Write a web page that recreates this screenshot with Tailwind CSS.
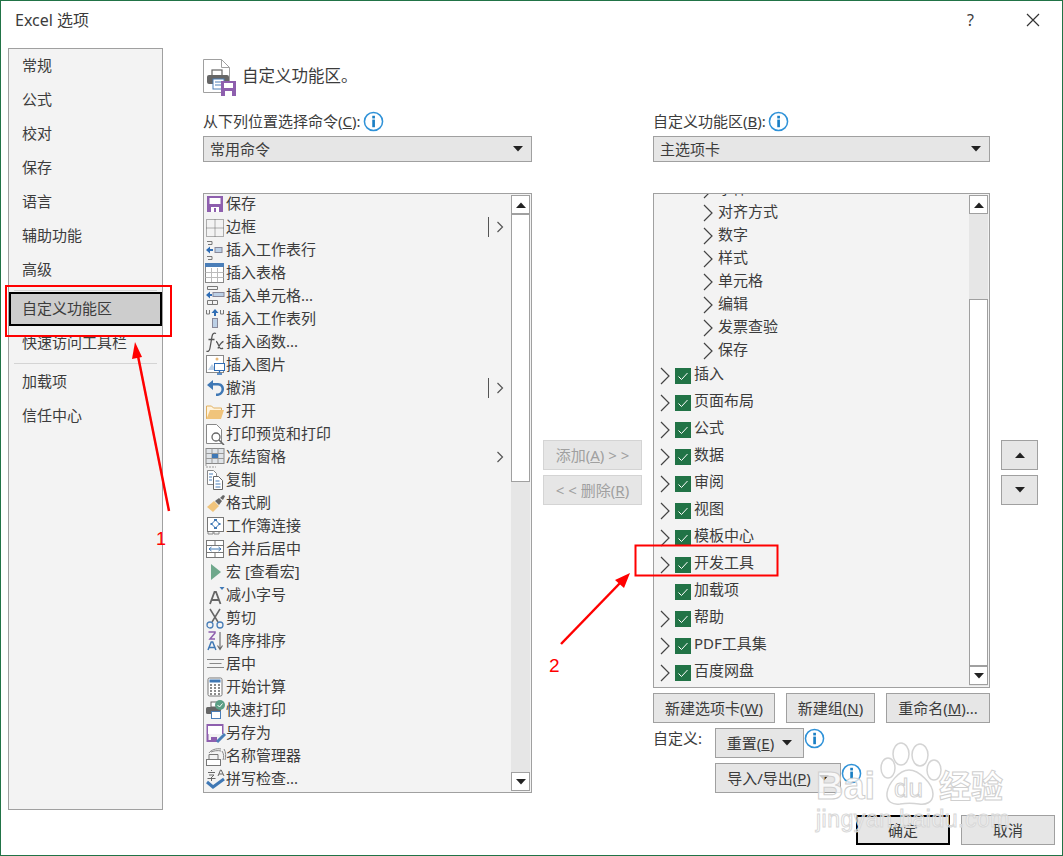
<!DOCTYPE html>
<html lang="zh-CN">
<head>
    <meta charset="UTF-8">
    <title>Excel 选项</title>
    <script src="https://cdn.jsdelivr.net/npm/@tailwindcss/browser@4"></script>
</head>
<body class="bg-white font-['Noto_Sans','Noto_Sans_CJK_SC',sans-serif] text-[15px] leading-none text-[#3c3c3c]">
<svg class="hidden">
    <symbol id="info" viewBox="0 0 22 22"><circle cx="11" cy="11" r="9.5" fill="#fff" stroke="#2f92d8" stroke-width="1.6"/><rect x="9.7" y="5" width="2.8" height="2.8" fill="#1b7fc4"/><rect x="9.7" y="9" width="2.8" height="8" fill="#1b7fc4"/></symbol>
    <symbol id="big" viewBox="0 0 10 18"><path d="M1 1l8 8-8 8" fill="none" stroke="#444" stroke-width="1.2"/></symbol>
    <symbol id="small" viewBox="0 0 8 12"><path d="M1.5 1l5 5-5 5" fill="none" stroke="#555" stroke-width="1.2"/></symbol>
    <symbol id="chk" viewBox="0 0 16 16"><rect width="16" height="16" fill="#217346"/><path d="M3.5 8.5l3 3 6-6.500" fill="none" stroke="#fff" stroke-width="1"/></symbol>
    <symbol id="up" viewBox="0 0 10 6"><path d="M0 6l5-5.500 5 5.500z" fill="#222"/></symbol>
    <symbol id="down" viewBox="0 0 10 6"><path d="M0 0l5 5.500 5-5.500z" fill="#222"/></symbol>
</svg>

<div class="relative box-border w-[1063px] h-[856px] border border-[#217346] overflow-hidden">
    <!-- title -->
    <div class="flex items-center h-[47px] pl-[14px] pb-[9px]">
        <span class="text-[16px]">Excel 选项</span>
        <span class="ml-auto mr-[52px] text-[16px]">?</span>
        <svg class="mr-[22px]" width="14" height="14" viewBox="0 0 14 14"><path d="M1 1l12 12M13 1L1 13" stroke="#333" stroke-width="1.200"/></svg>
    </div>

    <div class="flex h-[762px]">
        <!-- sidebar -->
        <div class="ml-[7px] w-[155px] shrink-0 border border-[#a0a0a0] bg-[#f3f3f3]">
            <div class="flex items-center h-[34px] px-[13px] pb-[2px]">常规</div>
            <div class="flex items-center h-[34px] px-[13px] pb-[2px]">公式</div>
            <div class="flex items-center h-[34px] px-[13px] pb-[2px]">校对</div>
            <div class="flex items-center h-[34px] px-[13px] pb-[2px]">保存</div>
            <div class="flex items-center h-[34px] px-[13px] pb-[2px]">语言</div>
            <div class="flex items-center h-[34px] px-[13px] pb-[2px]">辅助功能</div>
            <div class="flex items-center h-[34px] px-[13px] pb-[2px]">高级</div>
            <div class="h-[5px] pt-[3px] px-[5px]"><div class="h-px bg-[#d4d4d4]"></div></div>
            <div class="flex items-center h-[34px] px-[11px] pb-[2px] border-2 border-black bg-[#cdcdcd]">自定义功能区</div>
            <div class="flex items-center h-[34px] px-[13px] pb-[2px]">快速访问工具栏</div>
            <div class="h-[4px] pt-[3px] px-[5px]"><div class="h-px bg-[#d4d4d4]"></div></div>
            <div class="flex items-center h-[34px] px-[13px]">加载项</div>
            <div class="flex items-center h-[34px] px-[13px]">信任中心</div>
        </div>

        <!-- main -->
        <div class="ml-10 flex-1">
            <div class="flex items-center h-[62px] pb-[3px]">
                <svg width="34" height="38" viewBox="0 0 34 38">
                    <path d="M.5.5h18l8 8v25H.5z" fill="#fff" stroke="#a0a0a0"/><path d="M18.500.5v8h8" fill="none" stroke="#a0a0a0"/>
                    <rect x="9" y="11" width="10" height="6" fill="#fff" stroke="#666" stroke-width="1.200"/>
                    <rect x="4" y="16" width="22" height="9" rx="2" fill="#666"/>
                    <rect x="10" y="20" width="11" height="10" fill="#fff" stroke="#4a7eb8"/><path d="M12 23h7M12 26h7" stroke="#4a7eb8"/>
                    <rect x="18" y="22" width="15" height="15" fill="#8e5fae"/><rect x="21" y="24" width="9" height="5" fill="#fff"/><rect x="22" y="32" width="7" height="5" fill="#fff"/>
                </svg>
                <span class="ml-[5px] text-[16.5px] pb-[3px]">自定义功能区。</span>
            </div>
            <div class="flex">
                <!-- left column -->
                <div class="w-[329px] shrink-0">
                    <div class="flex items-center h-[26px] pb-[4px]">从下列位置选择命令(<u>C</u>):<svg class="ml-[2px]" width="21" height="21"><use href="#info"/></svg></div>
                    <div class="flex items-center justify-between h-[26px] px-[6px] border border-[#a0a0a0] bg-[#e6e6e6]">常用命令<svg class="mr-[2px]" width="10" height="6"><use href="#down"/></svg></div>
                    <div class="flex mt-[31px] h-[600px] border border-[#a0a0a0] bg-[#f3f3f3]">
                        <div class="flex-1 overflow-hidden">
                            <div class="-mt-[2px] text-[#3c3c3c]">
                                <div class="flex items-center h-[23px] pl-px"><svg class="-mr-px shrink-0" width="22" height="22" viewBox="0 0 22 22"><rect x="2" y="3" width="16" height="16" fill="#8e5fae"/><rect x="4.500" y="5" width="11" height="6" fill="#fff"/><rect x="6" y="14" width="8" height="5" fill="#fff"/><rect x="9" y="15" width="2" height="4" fill="#8e5fae"/></svg>保存</div>
                                <div class="flex items-center h-[23px] pl-px pr-[7px]"><svg class="-mr-px shrink-0" width="22" height="22" viewBox="0 0 22 22"><path d="M1.500 3.500h17v17h-17zM10 3.500v17M1.500 12h17" fill="none" stroke="#666" stroke-dasharray="1 1"/></svg>边框<span class="ml-auto w-px h-[20px] bg-[#555]"></span><svg class="ml-[7px]" width="8" height="12"><use href="#small"/></svg></div>
                                <div class="flex items-center h-[23px] pl-px"><svg class="-mr-px shrink-0" width="22" height="22" viewBox="0 0 22 22"><path d="M2 2.500h5v3H3M2 17.500h5v3H3" fill="none" stroke="#777"/><path d="M1 11l4-3.500v2.500h3v2H5v2.500z" fill="#2f6db5"/><rect x="10" y="8.500" width="7" height="5" fill="#bcd0e6" stroke="#889"/></svg>插入工作表行</div>
                                <div class="flex items-center h-[23px] pl-px"><svg class="-mr-px shrink-0" width="22" height="22" viewBox="0 0 22 22"><rect x=".5" y="1.500" width="18" height="19" fill="#fff" stroke="#888"/><path d="M.5 10.500h18M.5 15.500h18M6.500 6v14M12.500 6v14" stroke="#bbb"/><rect y="1" width="19" height="4" fill="#4a7eb8"/></svg>插入表格</div>
                                <div class="flex items-center h-[23px] pl-px"><svg class="-mr-px shrink-0" width="22" height="22" viewBox="0 0 22 22"><path d="M2.500 1.500h10v3h-10zM2.500 15.500h10v4h-10zM7.500 15.500v4" fill="none" stroke="#777"/><path d="M1 10l4-3.500v2.500h2v2H5v2.500z" fill="#2f6db5"/><rect x="8" y="7.500" width="11" height="4" fill="#bcd0e6" stroke="#889"/></svg>插入单元格...</div>
                                <div class="flex items-center h-[23px] pl-px"><svg class="-mr-px shrink-0" width="22" height="22" viewBox="0 0 22 22"><path d="M1.500 2v4h3V2M15.500 2v4h3V2" fill="none" stroke="#777"/><path d="M10 1l3.500 4H11v3H9V5H6.500z" fill="#2f6db5"/><rect x="7.500" y="10.500" width="5" height="9" fill="#bcd0e6" stroke="#889"/></svg>插入工作表列</div>
                                <div class="flex items-center h-[23px] pl-px"><svg class="-mr-px shrink-0" width="22" height="22" viewBox="0 0 22 22"><path d="M11 2.500c-2-1-3.500 0-4 3L5 17c-.5 3-2 4-3.500 3M3.500 8.500H9.500M11 10.500c2 0 2.500 6 4.500 7 1 .3 2 0 2.500-.5M18.500 10.500c-1 0-4.500 3.500-5.500 7" fill="none" stroke="#555" stroke-width="1.300"/></svg>插入函数...</div>
                                <div class="flex items-center h-[23px] pl-px"><svg class="-mr-px shrink-0" width="22" height="22" viewBox="0 0 22 22"><rect x="1.500" y="1.500" width="17" height="17" fill="#fff" stroke="#888"/><path d="M3 16l4-6 4 6z" fill="#bcd0e6"/><circle cx="12" cy="5" r="1.500" fill="#e8b878"/><rect x="9.500" y="9.500" width="10" height="7" fill="#fff" stroke="#2f6db5"/><path d="M14.500 17v2M12 20h5" stroke="#2f6db5" stroke-width="1.300"/></svg>插入图片</div>
                                <div class="flex items-center h-[23px] pl-px pr-[7px]"><svg class="-mr-px shrink-0" width="22" height="22" viewBox="0 0 22 22"><path d="M2 8l6-5v3h5c4 0 6 3 6 6s-2 6-6 7h-2v-2.500h2c2-.5 3.500-2 3.500-4.500S14.500 8.500 13 8.500H8V13z" fill="#3f78b5"/></svg>撤消<span class="ml-auto w-px h-[20px] bg-[#555]"></span><svg class="ml-[7px]" width="8" height="12"><use href="#small"/></svg></div>
                                <div class="flex items-center h-[23px] pl-px"><svg class="-mr-px shrink-0" width="22" height="22" viewBox="0 0 22 22"><path d="M1.500 19V6h5l2 2h8v2" fill="#fff3dc" stroke="#e0b060"/><path d="M1.500 19L5 10h14l-3 9z" fill="#f0c47c"/></svg>打开</div>
                                <div class="flex items-center h-[23px] pl-px"><svg class="-mr-px shrink-0" width="22" height="22" viewBox="0 0 22 22"><path d="M1.500 1.500h10l5 5v14h-15z" fill="#fff" stroke="#888"/><circle cx="11" cy="14" r="4" fill="#fff" stroke="#666" stroke-width="1.300"/><path d="M14 17l5 5" stroke="#666" stroke-width="1.600"/></svg>打印预览和打印</div>
                                <div class="flex items-center h-[23px] pl-px pr-[7px]"><svg class="-mr-px shrink-0" width="22" height="22" viewBox="0 0 22 22"><rect x="1" y="2.500" width="18" height="15" fill="#e0e4e8" stroke="#888"/><path d="M1 7.500h18M1 12.500h18M7 2.500v15M13 2.500v15" stroke="#999"/><rect x="7" y="8" width="6" height="4" fill="#3f78b5"/><path d="M1 18v3h10" fill="none" stroke="#999" stroke-dasharray="2 1"/></svg>冻结窗格<svg class="ml-auto" width="8" height="12"><use href="#small"/></svg></div>
                                <div class="flex items-center h-[23px] pl-px"><svg class="-mr-px shrink-0" width="22" height="22" viewBox="0 0 22 22"><path d="M2.500 1.500h6l3 3v11h-9z" fill="#fff" stroke="#888"/><path d="M8.500 7.500h5l4 4v9h-9z" fill="#fff" stroke="#666"/><path d="M4 5h4M4 8h3M4 11h3M10.500 12h4M10.500 15h5M10.500 18h5" stroke="#4a7eb8"/></svg>复制</div>
                                <div class="flex items-center h-[23px] pl-px"><svg class="-mr-px shrink-0" width="22" height="22" viewBox="0 0 22 22"><path d="M2 15l7-6 5 5-6 6z" fill="#f0c47c"/><path d="M10 9l4-3 3 3-3 4z" fill="#666"/><path d="M15 6l3-3 2 1-2 4z" fill="#666"/></svg>格式刷</div>
                                <div class="flex items-center h-[23px] pl-px"><svg class="-mr-px shrink-0" width="22" height="22" viewBox="0 0 22 22"><rect x="2.500" y="2.500" width="16" height="14" fill="#fff" stroke="#777"/><path d="M10.500 5l4 4-4 4-4-4z" fill="none" stroke="#3f78b5"/><rect x="9" y="4" width="3" height="2" fill="#3f78b5"/><rect x="9" y="12" width="3" height="2" fill="#3f78b5"/><rect x="5.500" y="8" width="2" height="2" fill="#3f78b5"/><rect x="13.500" y="8" width="2" height="2" fill="#3f78b5"/><path d="M3 17v2h5v-2M9 17v2h5v-2" fill="none" stroke="#888"/></svg>工作簿连接</div>
                                <div class="flex items-center h-[23px] pl-px"><svg class="-mr-px shrink-0" width="22" height="22" viewBox="0 0 22 22"><rect x="1.500" y="2.500" width="17" height="17" fill="#fff" stroke="#777"/><path d="M1.500 7.500h17M1.500 14.500h17M10 2.500v5M10 14.500v5" stroke="#777"/><path d="M4 11h12M4 11l2.500-2M4 11l2.500 2M16 11l-2.500-2M16 11l-2.500 2" fill="none" stroke="#3f78b5"/></svg>合并后居中</div>
                                <div class="flex items-center h-[23px] pl-px"><svg class="-mr-px shrink-0" width="22" height="22" viewBox="0 0 22 22"><path d="M6 3l10 8-10 8z" fill="#6fa88c"/></svg>宏 [查看宏]</div>
                                <div class="flex items-center h-[23px] pl-px"><svg class="-mr-px shrink-0" width="22" height="22" viewBox="0 0 22 22"><path d="M5 20l4.500-12h1.500L15.500 20M6.500 16h7.500" fill="none" stroke="#666" stroke-width="1.800"/><path d="M14.500 3h5l-2.500 3z" fill="#3f78b5"/></svg>减小字号</div>
                                <div class="flex items-center h-[23px] pl-px"><svg class="-mr-px shrink-0" width="22" height="22" viewBox="0 0 22 22"><path d="M5 2l8 13M15 2L7 15" stroke="#666" stroke-width="1.500"/><circle cx="5" cy="18" r="3" fill="none" stroke="#4a7eb8" stroke-width="1.300"/><circle cx="15" cy="18" r="3" fill="none" stroke="#4a7eb8" stroke-width="1.300"/></svg>剪切</div>
                                <div class="flex items-center h-[23px] pl-px"><svg class="-mr-px shrink-0" width="22" height="22" viewBox="0 0 22 22"><path d="M3.500 2h6.500v1L5 9h5" fill="none" stroke="#8e5fae" stroke-width="1.500"/><path d="M3 20l3.200-8h1.500l3.200 8M4.500 17.500h5" fill="none" stroke="#3f78b5" stroke-width="1.500"/><path d="M15 2v17M12.500 15.500L15 19.500l2.500-4" fill="none" stroke="#666" stroke-width="1.100"/></svg>降序排序</div>
                                <div class="flex items-center h-[23px] pl-px"><svg class="-mr-px shrink-0" width="22" height="22" viewBox="0 0 22 22"><path d="M2 6.500h17M4.500 10.500h12M2 14.500h17" stroke="#888"/></svg>居中</div>
                                <div class="flex items-center h-[23px] pl-px"><svg class="-mr-px shrink-0" width="22" height="22" viewBox="0 0 22 22"><rect x="3" y="2" width="14" height="18" rx="1.500" fill="#fff" stroke="#777"/><rect x="4.500" y="3.500" width="11" height="3" fill="#3f78b5"/><path d="M5 9h2M9 9h2M13 9h2M5 12h2M9 12h2M13 12h2M5 15h2M9 15h2M13 15h2M5 18h2M9 18h2M13 18h2" stroke="#666" stroke-width="1.500"/></svg>开始计算</div>
                                <div class="flex items-center h-[23px] pl-px"><svg class="-mr-px shrink-0" width="22" height="22" viewBox="0 0 22 22"><rect x="6" y="3" width="8" height="5" fill="#fff" stroke="#666"/><rect x="1" y="8" width="15" height="7" rx="1.500" fill="#666"/><rect x="6.500" y="12.500" width="9" height="7" fill="#fff" stroke="#4a7eb8"/><circle cx="15" cy="6" r="5" fill="#5b9f85"/><path d="M12.500 6l2 2 3-3.500" fill="none" stroke="#fff"/></svg>快速打印</div>
                                <div class="flex items-center h-[23px] pl-px"><svg class="-mr-px shrink-0" width="22" height="22" viewBox="0 0 22 22"><path d="M13 19H2.500V3h15v9" fill="none" stroke="#8e5fae" stroke-width="2"/><path d="M3 3h14v9H3z" fill="#fff"/><path d="M2 2h16v2H2z" fill="#8e5fae"/><rect x="6" y="15" width="6" height="5" fill="#8e5fae"/><path d="M12 20l8-8" stroke="#4a7eb8" stroke-width="3"/></svg>另存为</div>
                                <div class="flex items-center h-[23px] pl-px"><svg class="-mr-px shrink-0" width="22" height="22" viewBox="0 0 22 22"><path d="M4 8c2-3 7-5 12-4M6 7c2-1 7-2 10-1M17 6c2 3 2 6 1 9M19 4c2 3 2 8 1 11" fill="none" stroke="#888"/><rect x="1.500" y="14.500" width="14" height="6" fill="#fff" stroke="#777"/><path d="M4 14V9.500h9V14" fill="none" stroke="#777"/></svg>名称管理器</div>
                                <div class="flex items-center h-[23px] pl-px"><svg class="-mr-px shrink-0" width="22" height="22" viewBox="0 0 22 22"><path d="M3 4.500h7M6.500 2v1M4 7h5l-2 2M2.500 10.500h8M6.500 9v4" fill="none" stroke="#666"/><path d="M13 8l2.500-6h.7L19 8M14 6h4" fill="none" stroke="#666"/><path d="M2 14l6 5 11-8" fill="none" stroke="#3f78b5" stroke-width="3"/></svg>拼写检查...</div>
                            </div>
                        </div>
                        <div class="flex flex-col w-[19px] shrink-0 my-px mr-px bg-[#e6e6e6]">
                            <div class="flex items-center justify-center h-[19px] border border-[#a0a0a0] bg-white"><svg width="10" height="6"><use href="#up"/></svg></div>
                            <div class="h-[268px] border border-[#a0a0a0] bg-white"></div>
                            <div class="mt-auto flex items-center justify-center h-[19px] border border-[#a0a0a0] bg-white"><svg width="10" height="6"><use href="#down"/></svg></div>
                        </div>
                    </div>
                </div>

                <!-- add / remove -->
                <div class="ml-[11px] w-[99px] shrink-0 pt-[330px] flex flex-col gap-[5px] text-[#a0a0a0]">
                    <div class="flex items-center justify-center h-[30px] border border-[#d4d4d4] bg-[#e6e6e6]"><span class="whitespace-pre">添加(<u>A</u>) &gt; &gt;</span></div>
                    <div class="flex items-center justify-center h-[30px] border border-[#d4d4d4] bg-[#e6e6e6]"><span class="whitespace-pre">&lt; &lt; 删除(<u>R</u>)</span></div>
                </div>

                <!-- right column -->
                <div class="ml-[11px] w-[337px] shrink-0">
                    <div class="flex items-center h-[26px] pb-[4px]">自定义功能区(<u>B</u>):<svg class="ml-[2px]" width="21" height="21"><use href="#info"/></svg></div>
                    <div class="flex items-center justify-between h-[26px] px-[6px] border border-[#a0a0a0] bg-[#e6e6e6]">主选项卡<svg class="mr-[2px]" width="10" height="6"><use href="#down"/></svg></div>
                    <div class="flex mt-[31px] h-[495px] border border-[#a0a0a0] bg-[#f3f3f3]">
                        <div class="flex-1 overflow-hidden">
                            <div class="-mt-[16px]">
                                <div class="flex items-center h-[23px] pl-[49px]"><svg class="mr-[5px]" width="10" height="18"><use href="#big"/></svg><span class="-mt-[2px]">字体</span></div>
                                <div class="flex items-center h-[23px] pl-[49px]"><svg class="mr-[5px]" width="10" height="18"><use href="#big"/></svg><span class="-mt-[2px]">对齐方式</span></div>
                                <div class="flex items-center h-[23px] pl-[49px]"><svg class="mr-[5px]" width="10" height="18"><use href="#big"/></svg><span class="-mt-[2px]">数字</span></div>
                                <div class="flex items-center h-[23px] pl-[49px]"><svg class="mr-[5px]" width="10" height="18"><use href="#big"/></svg><span class="-mt-[2px]">样式</span></div>
                                <div class="flex items-center h-[23px] pl-[49px]"><svg class="mr-[5px]" width="10" height="18"><use href="#big"/></svg><span class="-mt-[2px]">单元格</span></div>
                                <div class="flex items-center h-[23px] pl-[49px]"><svg class="mr-[5px]" width="10" height="18"><use href="#big"/></svg><span class="-mt-[2px]">编辑</span></div>
                                <div class="flex items-center h-[23px] pl-[49px]"><svg class="mr-[5px]" width="10" height="18"><use href="#big"/></svg><span class="-mt-[2px]">发票查验</span></div>
                                <div class="flex items-center h-[23px] pl-[49px]"><svg class="mr-[5px]" width="10" height="18"><use href="#big"/></svg><span class="-mt-[2px]">保存</span></div>
                                <div class="flex items-center h-[27px] pl-[6px]"><svg class="mr-[5px]" width="10" height="18"><use href="#big"/></svg><svg class="mr-[3px]" width="16" height="16"><use href="#chk"/></svg><span class="-mt-[5px]">插入</span></div>
                                <div class="flex items-center h-[27px] pl-[6px]"><svg class="mr-[5px]" width="10" height="18"><use href="#big"/></svg><svg class="mr-[3px]" width="16" height="16"><use href="#chk"/></svg><span class="-mt-[5px]">页面布局</span></div>
                                <div class="flex items-center h-[27px] pl-[6px]"><svg class="mr-[5px]" width="10" height="18"><use href="#big"/></svg><svg class="mr-[3px]" width="16" height="16"><use href="#chk"/></svg><span class="-mt-[5px]">公式</span></div>
                                <div class="flex items-center h-[27px] pl-[6px]"><svg class="mr-[5px]" width="10" height="18"><use href="#big"/></svg><svg class="mr-[3px]" width="16" height="16"><use href="#chk"/></svg><span class="-mt-[5px]">数据</span></div>
                                <div class="flex items-center h-[27px] pl-[6px]"><svg class="mr-[5px]" width="10" height="18"><use href="#big"/></svg><svg class="mr-[3px]" width="16" height="16"><use href="#chk"/></svg><span class="-mt-[5px]">审阅</span></div>
                                <div class="flex items-center h-[27px] pl-[6px]"><svg class="mr-[5px]" width="10" height="18"><use href="#big"/></svg><svg class="mr-[3px]" width="16" height="16"><use href="#chk"/></svg><span class="-mt-[5px]">视图</span></div>
                                <div class="flex items-center h-[27px] pl-[6px]"><svg class="mr-[5px]" width="10" height="18"><use href="#big"/></svg><svg class="mr-[3px]" width="16" height="16"><use href="#chk"/></svg><span class="-mt-[5px]">模板中心</span></div>
                                <div class="flex items-center h-[27px] pl-[6px]"><svg class="mr-[5px]" width="10" height="18"><use href="#big"/></svg><svg class="mr-[3px]" width="16" height="16"><use href="#chk"/></svg><span class="-mt-[5px]">开发工具</span></div>
                                <div class="flex items-center h-[27px] pl-[21px]"><svg class="mr-[3px]" width="16" height="16"><use href="#chk"/></svg><span class="-mt-[5px]">加载项</span></div>
                                <div class="flex items-center h-[27px] pl-[6px]"><svg class="mr-[5px]" width="10" height="18"><use href="#big"/></svg><svg class="mr-[3px]" width="16" height="16"><use href="#chk"/></svg><span class="-mt-[5px]">帮助</span></div>
                                <div class="flex items-center h-[27px] pl-[6px]"><svg class="mr-[5px]" width="10" height="18"><use href="#big"/></svg><svg class="mr-[3px]" width="16" height="16"><use href="#chk"/></svg><span class="-mt-[5px]">PDF工具集</span></div>
                                <div class="flex items-center h-[27px] pl-[6px]"><svg class="mr-[5px]" width="10" height="18"><use href="#big"/></svg><svg class="mr-[3px]" width="16" height="16"><use href="#chk"/></svg><span class="-mt-[5px]">百度网盘</span></div>
                            </div>
                        </div>
                        <div class="flex flex-col w-[19px] shrink-0 my-px mr-px bg-[#e6e6e6]">
                            <div class="flex items-center justify-center h-[19px] border border-[#a0a0a0] bg-white"><svg width="10" height="6"><use href="#up"/></svg></div>
                            <div class="mt-[85px] h-[367px] border border-[#a0a0a0] bg-white"></div>
                            <div class="flex items-center justify-center h-[19px] border border-[#a0a0a0] bg-white"><svg width="10" height="6"><use href="#down"/></svg></div>
                        </div>
                    </div>
                    <div class="flex gap-[11px] mt-[5px]">
                        <div class="flex items-center justify-center w-[122px] h-[30px] border border-[#a0a0a0] bg-[#e6e6e6]"><span>新建选项卡(<u>W</u>)</span></div>
                        <div class="flex items-center justify-center w-[89px] h-[30px] border border-[#a0a0a0] bg-[#e6e6e6]"><span>新建组(<u>N</u>)</span></div>
                        <div class="flex items-center justify-center w-[104px] h-[30px] border border-[#a0a0a0] bg-[#e6e6e6]"><span>重命名(<u>M</u>)...</span></div>
                    </div>
                    <div class="flex mt-[5px]">
                        <div class="w-[62px] pt-[3px]">自定义:</div>
                        <div class="flex flex-col gap-[5px]">
                            <div class="flex">
                                <div class="flex items-center justify-center gap-[8px] w-[89px] h-[30px] border border-[#a0a0a0] bg-[#e6e6e6]"><span>重置(<u>E</u>)</span><svg width="10" height="6"><use href="#down"/></svg></div>
                                <svg width="21" height="21"><use href="#info"/></svg>
                            </div>
                            <div class="flex">
                                <div class="flex items-center justify-center gap-[8px] w-[126px] h-[30px] border border-[#a0a0a0] bg-[#e6e6e6]"><span>导入/导出(<u>P</u>)</span><svg width="10" height="6"><use href="#down"/></svg></div>
                                <svg width="21" height="21"><use href="#info"/></svg>
                            </div>
                        </div>
                    </div>
                </div>

                <!-- move up / down -->
                <div class="ml-[11px] w-[37px] shrink-0 pt-[330px] flex flex-col gap-[5px]">
                    <div class="flex items-center justify-center h-[30px] border border-[#a0a0a0] bg-[#e6e6e6]"><svg width="10" height="6"><use href="#up"/></svg></div>
                    <div class="flex items-center justify-center h-[30px] border border-[#a0a0a0] bg-[#e6e6e6]"><svg width="10" height="6"><use href="#down"/></svg></div>
                </div>
            </div>
        </div>
    </div>

    <!-- footer -->
    <div class="flex justify-end gap-[11px] pr-[7px] mt-[5px]">
        <div class="flex items-center justify-center w-[94px] h-[30px] border-2 border-black bg-[#e6e6e6]">确定</div>
        <div class="flex items-center justify-center w-[94px] h-[30px] border border-[#a0a0a0] bg-[#e6e6e6]">取消</div>
    </div>

    <!-- red annotations -->
    <svg class="absolute -left-px -top-px pointer-events-none" width="1063" height="856">
        <rect x="6" y="286" width="165" height="50" fill="none" stroke="#f00" stroke-width="2"/>
        <rect x="635.500" y="545.500" width="142" height="30" fill="none" stroke="#f00" stroke-width="2"/>
        <path d="M169 511L138 356" stroke="#f00" stroke-width="2.500"/><path d="M135 342l7 15-10 2z" fill="#f00"/>
        <path d="M561 644L621 582" stroke="#f00" stroke-width="2.500"/><path d="M630 573l-6 15-9-8z" fill="#f00"/>
    </svg>
    <span class="absolute left-[155px] top-[529px] font-['Liberation_Sans',sans-serif] text-[18px] text-[#f00]">1</span>
    <span class="absolute left-[548px] top-[655px] font-['Liberation_Sans',sans-serif] text-[19px] text-[#f00]">2</span>

    <!-- baidu watermark -->
    <svg class="absolute left-[870px] top-[735px] pointer-events-none" width="80" height="75" viewBox="0 0 80 75">
        <g fill="#fff" fill-opacity=".75" stroke="#d4d4d4" stroke-width="1.500">
            <ellipse cx="30" cy="18" rx="8" ry="11"/><ellipse cx="49" cy="19" rx="8" ry="11"/><ellipse cx="17" cy="32" rx="7" ry="10"/><ellipse cx="63" cy="34" rx="7" ry="10"/>
            <path d="M38 34c10 0 24 14 24 24 0 9-8 11-14 10-6-1-13-1-19 0-7 1-14-2-13-11 1-9 12-23 22-23z"/>
        </g>
    </svg>
    <span class="absolute left-[815px] top-[766px] font-['Liberation_Sans',sans-serif] font-bold text-[38px] text-white/75 [-webkit-text-stroke:1px_#cfcfcf] pointer-events-none">Bai</span>
    <span class="absolute left-[893px] top-[774px] font-['Liberation_Sans',sans-serif] text-[26px] text-white/80 [-webkit-text-stroke:1px_#cfcfcf] pointer-events-none">du</span>
    <span class="absolute left-[938px] top-[769px] font-bold text-[32px] text-white/75 [-webkit-text-stroke:1px_#cfcfcf] pointer-events-none">经验</span>
    <span class="absolute left-[815px] top-[807px] font-['Liberation_Sans',sans-serif] text-[23px] tracking-[.5px] text-white/50 [-webkit-text-stroke:1px_#d8d8d8] pointer-events-none">jingyan.baidu.com</span>
</div>
</body>
</html>
